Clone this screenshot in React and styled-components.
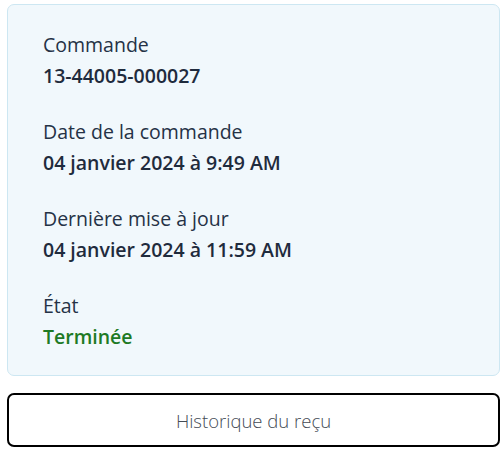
import React from 'react';
import styled, { createGlobalStyle } from 'styled-components';

const GlobalStyle = createGlobalStyle`
  body {
    margin: 0;
    background: #ffffff;
    font-family: 'Open Sans', 'Lato', sans-serif;
  }
`;

const Page = styled.div`
  display: flex;
  flex-direction: column;
  gap: 17px;
  padding: 4px 4px 0 7px;
  width: 493px;
`;

const Card = styled.section`
  display: flex;
  flex-direction: column;
  gap: 32px;
  padding: 28px 35px 26px;
  background: #f1f8fc;
  border: 1px solid #cde7f2;
  border-radius: 7px;
`;

const Field = styled.div`
  display: flex;
  flex-direction: column;
  gap: 7px;
`;

const Label = styled.span`
  font-size: 19.5px;
  line-height: 24px;
  font-weight: 400;
  color: #253246;
`;

const Value = styled.span`
  font-size: 19.5px;
  line-height: 24px;
  font-weight: 600;
  color: ${props => props.color || '#1f2b3d'};
`;

const HistoryButton = styled.button`
  height: 54px;
  width: 100%;
  background: #ffffff;
  border: 2px solid #000000;
  border-radius: 7px;
  font-family: 'Open Sans', 'Lato', sans-serif;
  font-size: 18.5px;
  font-weight: 300;
  color: #444b55;
  cursor: pointer;
`;

const fields = [
  { label: 'Commande', value: '13-44005-000027' },
  { label: 'Date de la commande', value: '04 janvier 2024 à 9:49 AM' },
  { label: 'Dernière mise à jour', value: '04 janvier 2024 à 11:59 AM' },
  { label: 'État', value: 'Terminée', color: '#1e7a25' },
];

export default function App() {
  return (
    <>
      <GlobalStyle />
      <Page>
        <Card>
          {fields.map(f => (
            <Field key={f.label}>
              <Label>{f.label}</Label>
              <Value color={f.color}>{f.value}</Value>
            </Field>
          ))}
        </Card>
        <HistoryButton>Historique du reçu</HistoryButton>
      </Page>
    </>
  );
}
